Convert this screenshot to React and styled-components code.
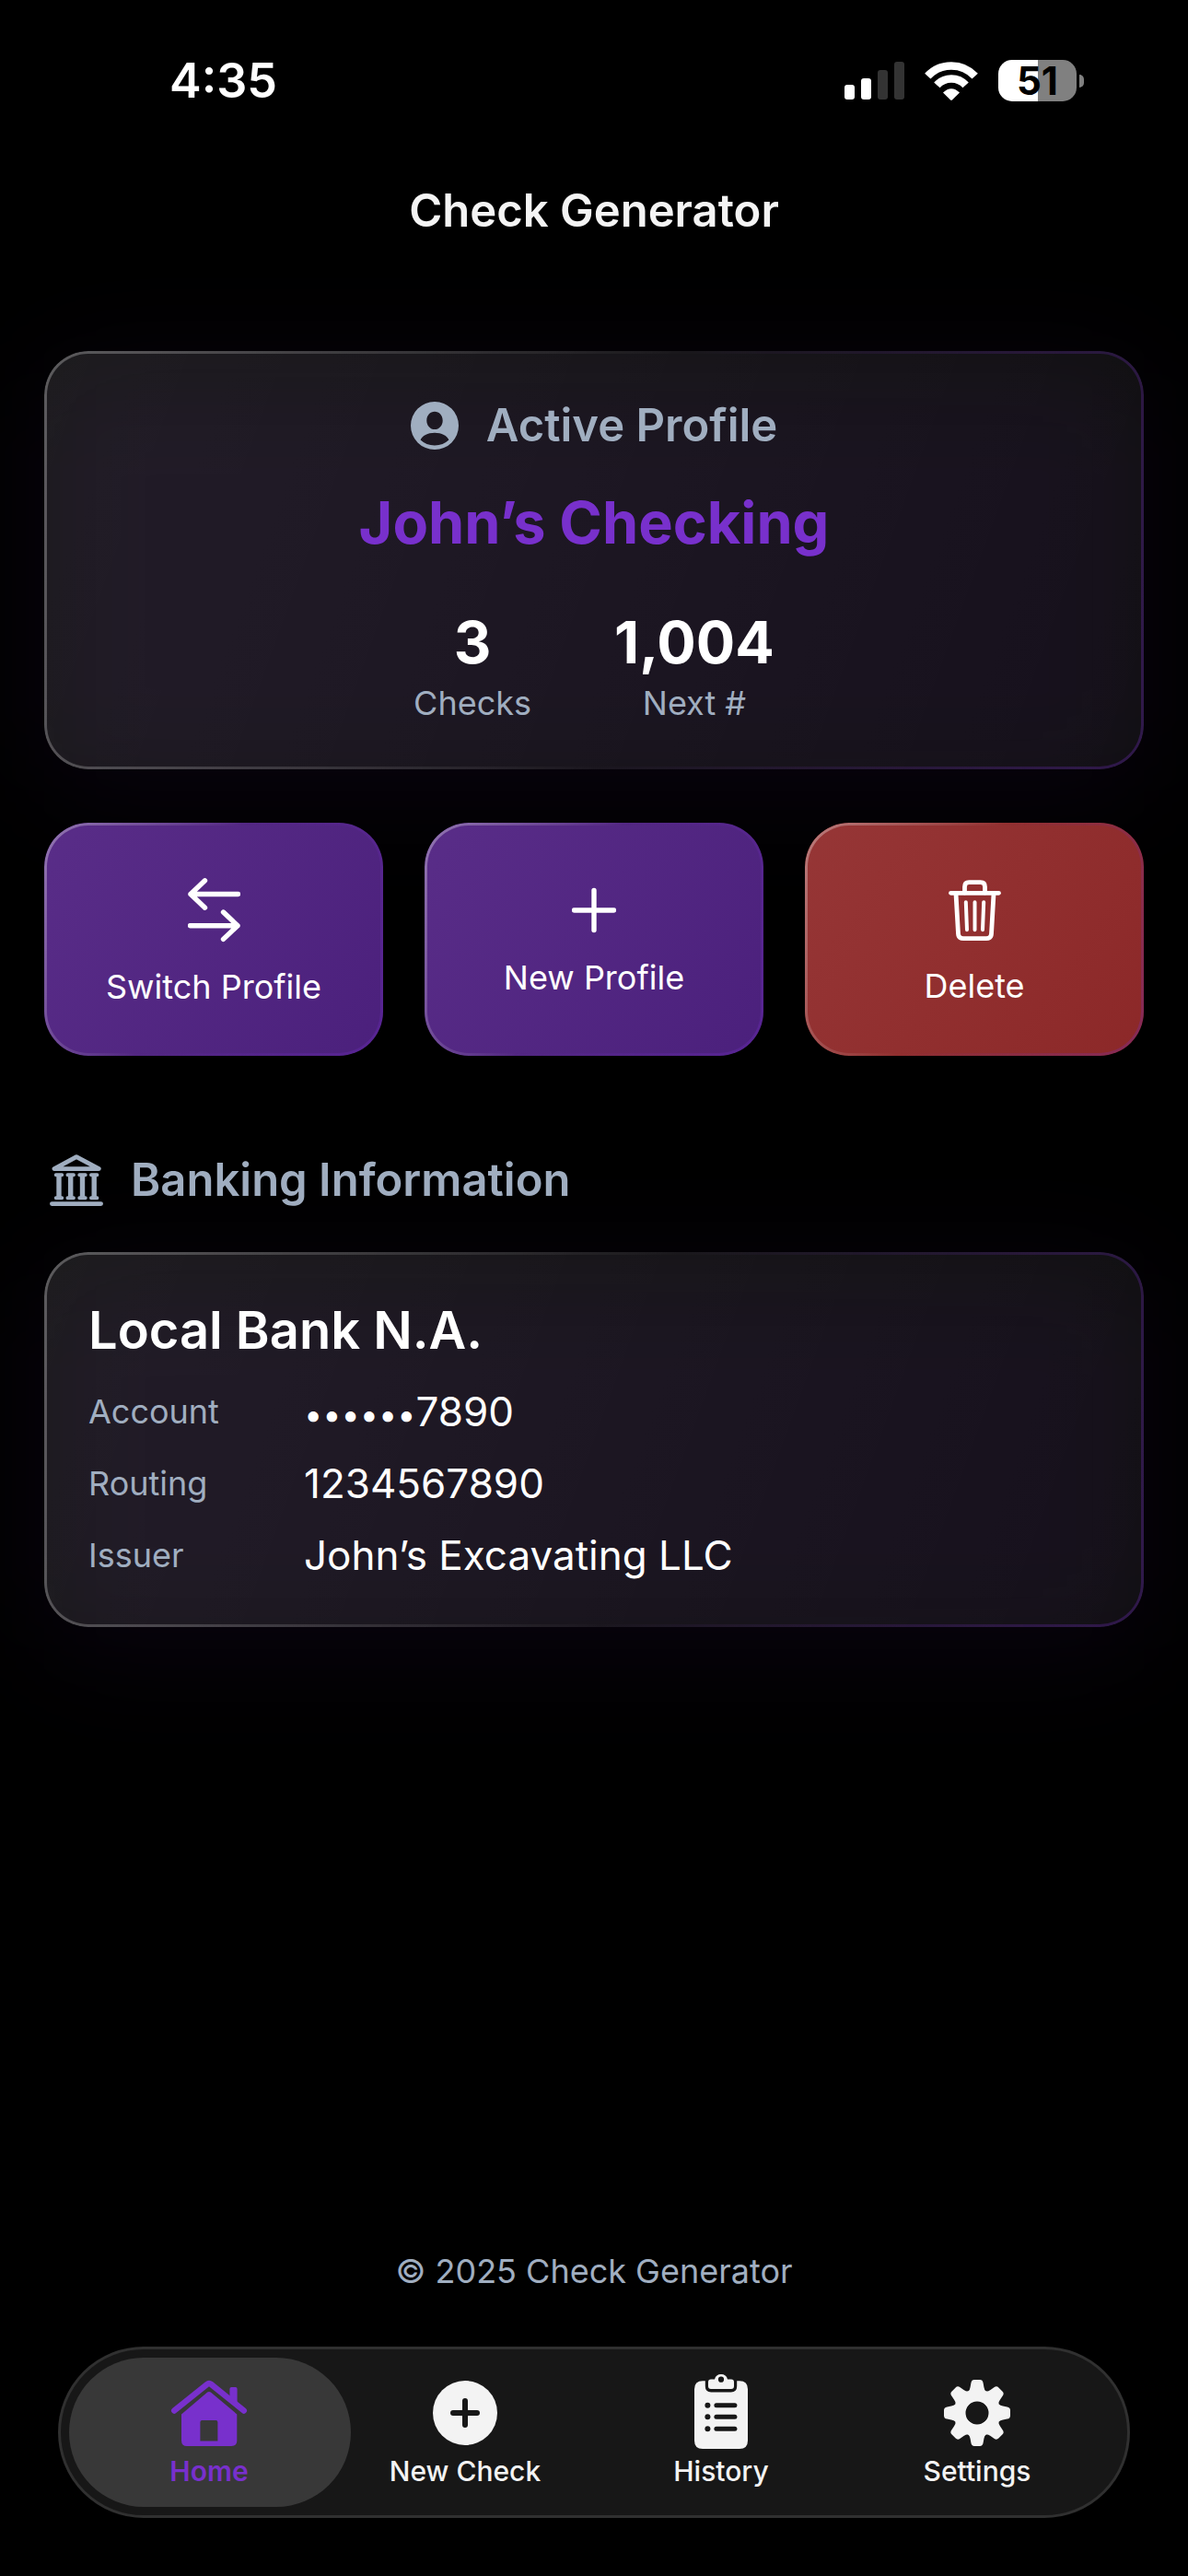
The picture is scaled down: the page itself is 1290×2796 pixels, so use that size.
import React, { useState } from "react";
import styled, { createGlobalStyle } from "styled-components";

const GlobalStyle = createGlobalStyle`
  * {
    box-sizing: border-box;
  }
  body {
    margin: 0;
    background: #000;
    color: #fff;
    font-family: Inter, "Liberation Sans", sans-serif;
  }
  h1, h2, h3, p, dl, dd {
    margin: 0;
  }
`;

const actions = [
  { id: "switch", label: "Switch Profile", icon: <SwitchIcon /> },
  { id: "new", label: "New Profile", icon: <PlusIcon /> },
  { id: "delete", label: "Delete", icon: <TrashIcon />, danger: true },
];

const bankRows = [
  { label: "Account", masked: "••••••", value: "7890" },
  { label: "Routing", value: "1234567890" },
  { label: "Issuer", value: "John’s Excavating LLC" },
];

const tabs = [
  { id: "home", label: "Home", icon: <HouseIcon /> },
  { id: "check", label: "New Check", icon: <PlusCircleIcon /> },
  { id: "history", label: "History", icon: <ClipboardIcon /> },
  { id: "settings", label: "Settings", icon: <GearIcon /> },
];

const App = () => {
  const [active, setActive] = useState("home");

  return (
    <Page>
      <GlobalStyle />
      <StatusBar>
        <Clock>4:35</Clock>
        <StatusIcons>
          <SignalIcon />
          <WifiIcon />
          <Battery>51</Battery>
        </StatusIcons>
      </StatusBar>
      <Header>
        <Title>Check Generator</Title>
      </Header>

      <Main>
        <ProfileCard>
          <SectionTitle>
            <PersonIcon />
            Active Profile
          </SectionTitle>
          <ProfileName>John’s Checking</ProfileName>
          <Stats>
            <Stat>
              <StatValue>3</StatValue>
              <Caption>Checks</Caption>
            </Stat>
            <Stat>
              <StatValue>1,004</StatValue>
              <Caption>Next #</Caption>
            </Stat>
          </Stats>
        </ProfileCard>

        <Actions>
          {actions.map((a) => (
            <ActionButton key={a.id} type="button" $danger={a.danger}>
              {a.icon}
              {a.label}
            </ActionButton>
          ))}
        </Actions>

        <BankHeader>
          <BankIcon />
          Banking Information
        </BankHeader>
        <Card>
          <BankName>Local Bank N.A.</BankName>
          <Rows>
            {bankRows.map((r) => (
              <Row key={r.label}>
                <Caption as="dt">{r.label}</Caption>
                <Value>
                  {r.masked && <Mask>{r.masked}</Mask>}
                  {r.value}
                </Value>
              </Row>
            ))}
          </Rows>
        </Card>
      </Main>

      <Footer>© 2025 Check Generator</Footer>
      <TabBar>
        {tabs.map((t) => (
          <Tab
            key={t.id}
            type="button"
            $active={active === t.id}
            onClick={() => setActive(t.id)}
          >
            {t.icon}
            {t.label}
          </Tab>
        ))}
      </TabBar>
    </Page>
  );
};

function SignalIcon() {
  return (
    <svg width="65" height="42" viewBox="0 0 65 42" fill="#fff">
      <rect x="0" y="25" width="11" height="16" rx="3" />
      <rect x="18" y="18" width="11" height="23" rx="3" />
      <rect x="36" y="9" width="11" height="32" rx="3" fill="#333" />
      <rect x="54" y="0" width="11" height="41" rx="3" fill="#333" />
    </svg>
  );
}

function WifiIcon() {
  return (
    <svg width="58" height="42" viewBox="0 0 58 42" fill="none" stroke="#fff">
      <path d="M3.3 15.7A35 35 0 0 1 54.7 15.7" strokeWidth="8.6" />
      <path d="M13.4 25.4A21 21 0 0 1 44.6 25.4" strokeWidth="8.6" />
      <path
        d="M20 33.5Q29 25 38 33.5L30.2 41.3Q29 42.4 27.8 41.3Z"
        fill="#fff"
        stroke="none"
      />
    </svg>
  );
}

function PersonIcon() {
  return (
    <svg width="52" height="52" viewBox="0 0 52 52" fill="currentColor">
      <path
        fillRule="evenodd"
        d="M26 0a26 26 0 1 1 0 52a26 26 0 0 1 0-52ZM26 10.8c-4.9 0-8.7 4.2-8.7 9.6c0 5.3 3.9 9.7 8.7 9.7s8.7-4.4 8.7-9.7c0-5.4-3.8-9.6-8.7-9.6ZM10.6 41.6c4 3.8 9.3 6 15.4 6s11.4-2.2 15.4-6c-1.6-4.6-8-7.8-15.4-7.8s-13.8 3.2-15.4 7.8Z"
      />
    </svg>
  );
}

function SwitchIcon() {
  return (
    <svg
      width="57"
      height="79"
      viewBox="0 -9 57 79"
      fill="none"
      stroke="#fff"
      strokeWidth="5.4"
      strokeLinecap="round"
      strokeLinejoin="round"
    >
      <path d="M18.5 2.8L3 17.5L18.5 32.2M3 17.5H54.5" />
      <path d="M38.5 37L54 51.7L38.5 66.4M54 51.7H2.5" />
    </svg>
  );
}

function PlusIcon() {
  return (
    <svg
      width="48"
      height="58"
      viewBox="0 -9 48 58"
      stroke="#fff"
      strokeWidth="5.4"
      strokeLinecap="round"
    >
      <path d="M24 2.5V45.5M2.5 24H45.5" />
    </svg>
  );
}

function TrashIcon() {
  return (
    <svg
      width="57"
      height="76"
      viewBox="0 -9 57 76"
      fill="none"
      stroke="#fff"
      strokeWidth="4.8"
      strokeLinecap="round"
      strokeLinejoin="round"
    >
      <path d="M2.5 14.3H54.5" />
      <path d="M17.5 14V7.5Q17.5 2.7 22.3 2.7H34.7Q39.5 2.7 39.5 7.5V14" />
      <path d="M8 15L10.5 58.5Q10.8 63.7 16 63.7H41Q46.2 63.7 46.5 58.5L49 15" />
      <path d="M18.8 24.2L20 54.2M28.5 24.2V54.2M38.2 24.2L37 54.2" strokeWidth="4" />
    </svg>
  );
}

function BankIcon() {
  return (
    <svg
      width="58"
      height="56"
      viewBox="0 0 58 56"
      fill="none"
      stroke="currentColor"
      strokeLinecap="round"
      strokeLinejoin="round"
    >
      <path d="M29 2.6L5 15.6H53.4Z" strokeWidth="4.8" />
      {[10, 22.7, 35.5, 48.2].map((x) => (
        <g key={x}>
          <path d={`M${x} 22V47`} strokeWidth="5.4" strokeLinecap="butt" />
          <path d={`M${x - 3.2} 22.2h6.4M${x - 3.2} 47.2h6.4`} strokeWidth="4" />
        </g>
      ))}
      <path d="M2.4 53.6H55.6" strokeWidth="4.8" />
    </svg>
  );
}

function HouseIcon() {
  return (
    <svg width="90" height="90" viewBox="0 0 90 90" fill="currentColor">
      <path
        d="M7.2 42.6L42.8 13.9Q45 12.2 47.2 13.9L82.8 42.6"
        fill="none"
        stroke="currentColor"
        strokeWidth="6.4"
        strokeLinecap="round"
      />
      <path d="M67.4 32V19Q67.4 17 69.4 17H73.6Q75.6 17 75.6 19V38Z" />
      <path
        fillRule="evenodd"
        d="M43.2 22.6Q45 21.2 46.8 22.6L75.3 46.4V75Q75.3 81 69.3 81H21Q15 81 15 75V46.4ZM37.4 53Q35.4 53 35.4 55V75.4H54.4V55Q54.4 53 52.4 53Z"
      />
    </svg>
  );
}

function PlusCircleIcon() {
  return (
    <svg width="90" height="90" viewBox="0 0 90 90" fill="currentColor">
      <circle cx="45" cy="45" r="35" />
      <path
        d="M45 32V58M32 45H58"
        stroke="#171717"
        strokeWidth="6"
        strokeLinecap="round"
      />
    </svg>
  );
}

function ClipboardIcon() {
  return (
    <svg width="90" height="90" viewBox="0 0 90 90" fill="currentColor">
      <path d="M25 10.3H27.8V16Q27.8 22.4 34.2 22.4H55.8Q62.2 22.4 62.2 16V10.3H65Q74 10.3 74 19.3V75Q74 84 65 84H25Q16 84 16 75V19.3Q16 10.3 25 10.3Z" />
      <path
        fillRule="evenodd"
        d="M34 8.6H38A7.2 7.2 0 0 1 52 8.6H56Q59 8.6 59 11.6V16Q59 19 56 19H34Q31 19 31 16V11.6Q31 8.6 34 8.6ZM45 5.6a3.1 3.1 0 1 0 0 6.2a3.1 3.1 0 0 0 0-6.2Z"
      />
      {[36.7, 49.3, 62.2].map((y) => (
        <g key={y} fill="#171717">
          <circle cx="30.4" cy={y} r="3" />
          <rect x="37.4" y={y - 2.5} width="25" height="5" rx="2.5" />
        </g>
      ))}
    </svg>
  );
}

function GearIcon() {
  return (
    <svg width="90" height="90" viewBox="0 0 90 90" fill="currentColor">
      {[0, 45, 90, 135, 180, 225, 270, 315].map((deg) => (
        <path
          key={deg}
          transform={`rotate(${deg} 45 45)`}
          d="M35.5 21.5Q37.2 19.8 37.6 17L38.4 12.4Q39 9 42 9H48Q51 9 51.6 12.4L52.4 17Q52.8 19.8 54.5 21.5L50 30H40Z"
        />
      ))}
      <circle cx="45" cy="45" r="19" fill="none" stroke="currentColor" strokeWidth="13" />
      <circle cx="45" cy="45" r="12" fill="#171717" />
    </svg>
  );
}

const Page = styled.div`
  min-height: 100vh;
  display: flex;
  flex-direction: column;
  overflow: hidden;
`;

const StatusBar = styled.div`
  height: 177px;
  padding: 0 113px 2px 184px;
  display: flex;
  align-items: center;
  justify-content: space-between;
`;

const Clock = styled.span`
  font-size: 52px;
  font-weight: 600;
`;

const StatusIcons = styled.div`
  display: flex;
  align-items: center;
  gap: 22px;
`;

const Battery = styled.span`
  position: relative;
  width: 85px;
  height: 45px;
  margin-right: 8px;
  border-radius: 15px;
  background: linear-gradient(90deg, #fff 51%, #808080 51%);
  color: #000;
  font-size: 42px;
  font-weight: 700;
  line-height: 45px;
  text-align: center;

  &::after {
    content: "";
    position: absolute;
    left: 88px;
    top: 16px;
    width: 5px;
    height: 14px;
    border-radius: 0 5px 5px 0;
    background: #808080;
  }
`;

const Header = styled.header`
  height: 102px;
  display: flex;
  align-items: center;
  justify-content: center;
`;

const Title = styled.h1`
  color: #f4f4f4;
  font-size: 49px;
  font-weight: 600;
`;

const Main = styled.main`
  flex: 1;
  padding: 102px 48px 0;
`;

const Card = styled.section`
  position: relative;
  z-index: 0;
  padding: 48px;
  border-radius: 48px;
  background: linear-gradient(
    110deg,
    rgba(255, 255, 255, 0.11),
    rgba(255, 255, 255, 0.06)
  );

  /* purple glow behind the glass */
  &::before {
    content: "";
    position: absolute;
    z-index: -1;
    inset: 24px 0 -24px;
    border-radius: 48px;
    background: rgba(115, 40, 195, 0.08);
    filter: blur(60px);
  }

  &::after {
    content: "";
    position: absolute;
    inset: 0;
    padding: 3px;
    border-radius: 48px;
    background: linear-gradient(
      102deg,
      rgba(255, 255, 255, 0.28),
      rgba(255, 255, 255, 0.01) 54%,
      rgba(120, 48, 204, 0.3)
    );
    mask: linear-gradient(#000 0 0) content-box exclude,
      linear-gradient(#000 0 0);
    pointer-events: none;
  }
`;

const ProfileCard = styled(Card)`
  display: flex;
  flex-direction: column;
  align-items: center;
`;

const SectionTitle = styled.h2`
  display: flex;
  align-items: center;
  gap: 30px;
  color: #a0aec0;
  font-size: 49px;
  font-weight: 600;
  line-height: 66px;
`;

const BankHeader = styled(SectionTitle)`
  padding: 102px 6px 45px;
`;

const ProfileName = styled.p`
  margin-top: 30px;
  color: #7830cc;
  font-size: 63px;
  font-weight: 700;
  line-height: 84px;
`;

const Stats = styled.div`
  display: flex;
  gap: 90px;
  margin-top: 46px;
`;

const Stat = styled.div`
  display: flex;
  flex-direction: column;
  align-items: center;
`;

const StatValue = styled.strong`
  font-size: 63px;
  font-weight: 700;
  line-height: 84px;
`;

const Caption = styled.span`
  color: #a0aec0;
  font-size: 36px;
  line-height: 48px;
`;

const Actions = styled.div`
  display: grid;
  grid-template-columns: repeat(3, 1fr);
  gap: 45px;
  margin-top: 58px;
`;

const ActionButton = styled.button`
  position: relative;
  height: 253px;
  padding: 0;
  border: 0;
  border-radius: 48px;
  display: flex;
  flex-direction: column;
  align-items: center;
  justify-content: center;
  gap: 24px;
  background: ${(p) =>
    p.$danger
      ? "linear-gradient(125deg, #963636, #8c2828)"
      : "linear-gradient(125deg, #592d88, #4b207c)"};
  color: #fff;
  font-family: inherit;
  font-size: 36px;
  line-height: 48px;
  cursor: pointer;

  &::after {
    content: "";
    position: absolute;
    inset: 0;
    padding: 3px;
    border-radius: 48px;
    background: linear-gradient(
      115deg,
      rgba(255, 255, 255, 0.35),
      rgba(255, 255, 255, 0) 45%,
      rgba(120, 48, 204, 0.3)
    );
    mask: linear-gradient(#000 0 0) content-box exclude,
      linear-gradient(#000 0 0);
  }
`;

const BankName = styled.h3`
  font-size: 56px;
  font-weight: 600;
  line-height: 75px;
`;

const Rows = styled.dl`
  display: flex;
  flex-direction: column;
  gap: 18px;
  margin-top: 20px;
`;

const Row = styled.div`
  display: grid;
  grid-template-columns: 210px 1fr;
  column-gap: 24px;
  align-items: center;
`;

const Value = styled.dd`
  font-size: 44px;
  line-height: 60px;
`;

const Mask = styled.span`
  font-size: 36px;
  line-height: 36px;
`;

const Footer = styled.footer`
  padding-bottom: 58px;
  color: #a0aec0;
  font-size: 36px;
  line-height: 48px;
  text-align: center;
`;

const TabBar = styled.nav`
  margin: 0 63px 63px;
  padding: 9px;
  display: flex;
  border: 3px solid #303030;
  border-radius: 93px;
  background: #171717;
`;

const Tab = styled.button`
  flex: 1;
  height: 162px;
  padding: 0 2px 6px 0;
  border: 0;
  border-radius: 81px;
  display: flex;
  flex-direction: column;
  align-items: center;
  justify-content: center;
  background: ${(p) => (p.$active ? "#383838" : "transparent")};
  color: ${(p) => (p.$active ? "#7830cc" : "#f3f3f3")};
  font-family: inherit;
  font-size: 30px;
  font-weight: ${(p) => (p.$active ? 600 : 500)};
  line-height: 36px;
  cursor: pointer;

  & + & {
    margin-left: -28px;
  }
`;

export default App;
